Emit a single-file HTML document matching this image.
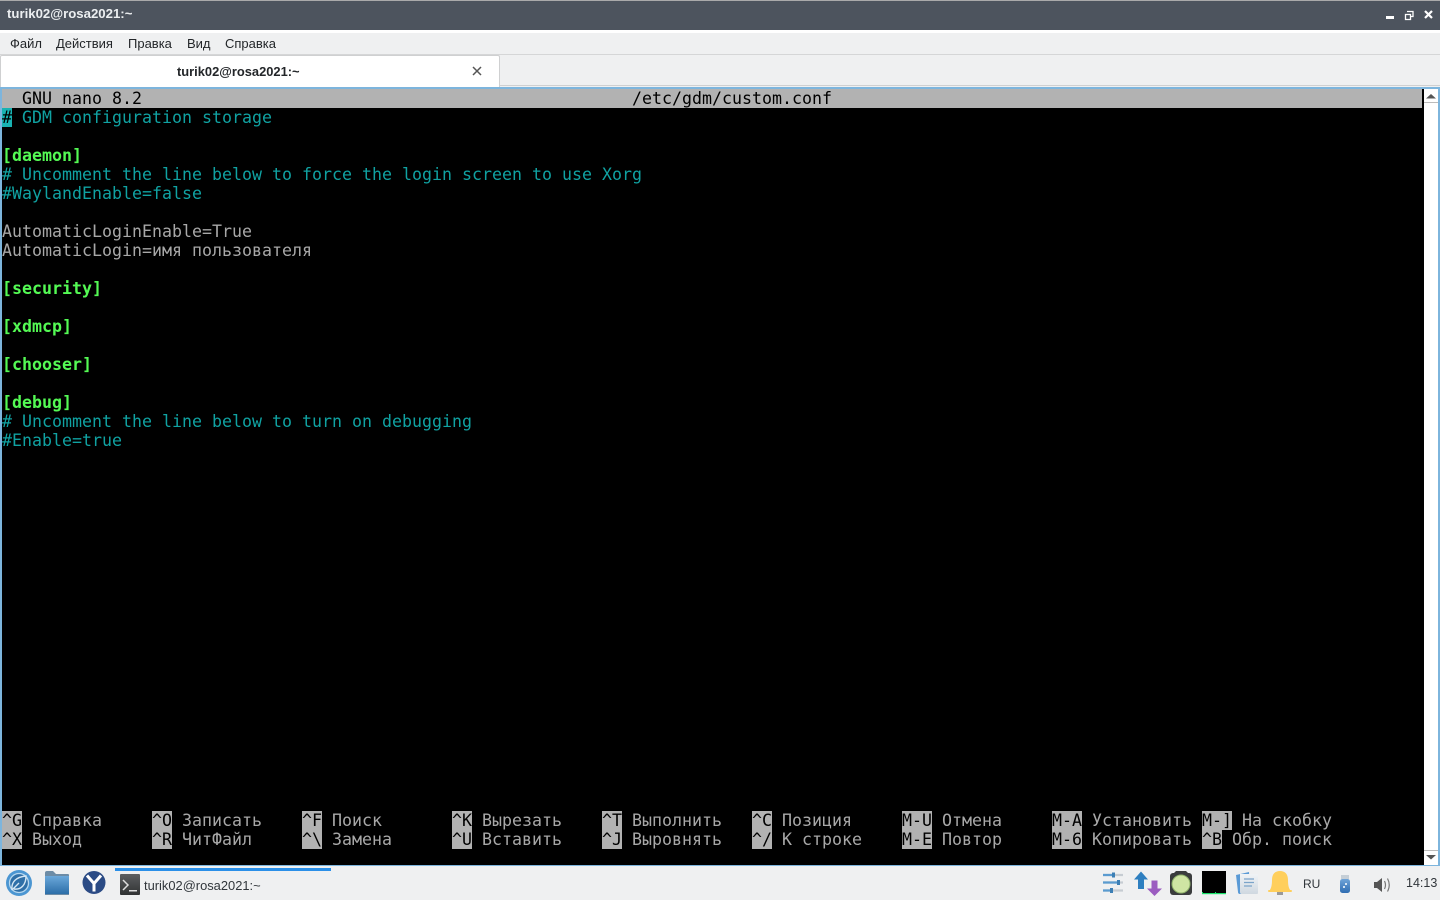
<!DOCTYPE html>
<html><head><meta charset="utf-8"><style>
html,body{margin:0;padding:0;width:1440px;height:900px;overflow:hidden;background:#eff0f1}
*{box-sizing:border-box}
.a{position:absolute;white-space:pre}
.ui{font-family:"Liberation Sans","Noto Sans CJK SC",sans-serif}
.m{top:35px;font-size:13px;line-height:17px;color:#232629}
#term{position:absolute;left:2px;top:89px;width:1422px;height:776px;background:#000;overflow:hidden}
.r{position:absolute;left:0;height:19px;line-height:19px;white-space:pre;font-family:"DejaVu Sans Mono",monospace;font-size:16.61px;color:#a8a8a8}
.c{color:#10a2a2}.g{color:#54fa54;font-weight:bold}.k{background:#b2b2b2;color:#000;display:inline-block;height:19px}
</style></head><body>
<div class="a" style="left:0;top:0;width:1440px;height:1px;background:#aaa"></div>
<div class="a" style="left:0;top:1px;width:1440px;height:29px;background:#4d545e"></div>
<div class="a ui" style="left:7px;top:6px;font-size:13.2px;font-weight:bold;color:#eceff1;line-height:16px">turik02@rosa2021:~</div>
<svg class="a" style="left:1380px;top:6px" width="60" height="20" viewBox="0 0 60 20"><rect x="6" y="10" width="8" height="3" fill="#fff"/><path d="M27 5.500h6v5h-2M25.500 8.500h5v5h-5z" fill="none" stroke="#fff" stroke-width="1.300"/><path d="M45 5l7 7M52 5l-7 7" stroke="#fff" stroke-width="2.200"/></svg>
<div class="a" style="left:0;top:30px;width:1440px;height:3px;background:#fff"></div>
<div class="a" style="left:0;top:33px;width:1440px;height:22px;background:#eff0f1;border-bottom:1px solid #d5d6d7"></div>
<div class="a ui m" style="left:10px">Файл</div>
<div class="a ui m" style="left:56px">Действия</div>
<div class="a ui m" style="left:128px">Правка</div>
<div class="a ui m" style="left:187px">Вид</div>
<div class="a ui m" style="left:225px">Справка</div>
<div class="a" style="left:0;top:55px;width:1440px;height:31px;background:#eff0f1;border-bottom:1px solid #cfd0d1"></div>
<div class="a" style="left:0;top:55px;width:500px;height:32px;background:#fff;border:1px solid #cfd0d1;border-bottom:none;border-radius:2px 2px 0 0"></div>
<div class="a ui" style="left:177px;top:63px;font-size:12.9px;font-weight:bold;line-height:17px;color:#232629">turik02@rosa2021:~</div>
<svg class="a" style="left:472px;top:66px" width="10" height="10" viewBox="0 0 10 10"><path d="M1 1l8 8M9 1l-8 8" stroke="#555" stroke-width="1.500"/></svg>
<div class="a" style="left:0;top:87px;width:1440px;height:779px;background:#fff;border:2px solid #7db5dd"></div>
<div id="term">
<div class="a" style="left:0;top:0;width:1420px;height:19px;background:#b2b2b2"></div>
<div class="r" style="top:0;color:#000">  GNU nano 8.2                                                 /etc/gdm/custom.conf</div>
<div class="r c" style="top:19px"><span style="background:#18b2b2;color:#000">#</span> GDM configuration storage</div>
<div class="r g" style="top:57px">[daemon]</div>
<div class="r c" style="top:76px"># Uncomment the line below to force the login screen to use Xorg</div>
<div class="r c" style="top:95px">#WaylandEnable=false</div>
<div class="r" style="top:133px">AutomaticLoginEnable=True</div>
<div class="r" style="top:152px">AutomaticLogin=имя пользователя</div>
<div class="r g" style="top:190px">[security]</div>
<div class="r g" style="top:228px">[xdmcp]</div>
<div class="r g" style="top:266px">[chooser]</div>
<div class="r g" style="top:304px">[debug]</div>
<div class="r c" style="top:323px"># Uncomment the line below to turn on debugging</div>
<div class="r c" style="top:342px">#Enable=true</div>
<div class="r" style="top:722px"><span class="k">^G</span> Справка</div><div class="r" style="top:741px"><span class="k">^X</span> Выход</div>
<div class="r" style="top:722px;left:150px"><span class="k">^O</span> Записать</div><div class="r" style="top:741px;left:150px"><span class="k">^R</span> ЧитФайл</div>
<div class="r" style="top:722px;left:300px"><span class="k">^F</span> Поиск</div><div class="r" style="top:741px;left:300px"><span class="k">^\</span> Замена</div>
<div class="r" style="top:722px;left:450px"><span class="k">^K</span> Вырезать</div><div class="r" style="top:741px;left:450px"><span class="k">^U</span> Вставить</div>
<div class="r" style="top:722px;left:600px"><span class="k">^T</span> Выполнить</div><div class="r" style="top:741px;left:600px"><span class="k">^J</span> Выровнять</div>
<div class="r" style="top:722px;left:750px"><span class="k">^C</span> Позиция</div><div class="r" style="top:741px;left:750px"><span class="k">^/</span> К строке</div>
<div class="r" style="top:722px;left:900px"><span class="k">M-U</span> Отмена</div><div class="r" style="top:741px;left:900px"><span class="k">M-E</span> Повтор</div>
<div class="r" style="top:722px;left:1050px"><span class="k">M-A</span> Установить</div><div class="r" style="top:741px;left:1050px"><span class="k">M-6</span> Копировать</div>
<div class="r" style="top:722px;left:1200px"><span class="k">M-]</span> На скобку</div><div class="r" style="top:741px;left:1200px"><span class="k">^B</span> Обр. поиск</div>
</div>
<div class="a" style="left:1424px;top:89px;width:14px;height:776px;background:#fff"></div>
<div class="a" style="left:1424px;top:102px;width:14px;height:1px;background:#bbb"></div>
<div class="a" style="left:1424px;top:850px;width:14px;height:1px;background:#bbb"></div>
<svg class="a" style="left:1424px;top:89px" width="14" height="776"><path d="M2 9.500l5-4.500 5 4.500z" fill="#555"/><path d="M2 766l5 4.500 5-4.500z" fill="#555"/></svg>
<div class="a" style="left:0;top:866px;width:1440px;height:34px;background:#eff0f1"></div>
<div class="a" style="left:115px;top:868px;width:216px;height:3px;background:#2a8fe8"></div>
<svg class="a" style="left:0;top:866px" width="140" height="34" viewBox="0 0 140 34">
<defs><linearGradient id="f" x1="0" y1="0" x2="0" y2="1"><stop offset="0" stop-color="#6ba8da"/><stop offset="1" stop-color="#2c6ea8"/></linearGradient>
<linearGradient id="t" x1="0" y1="0" x2="0" y2="1"><stop offset="0" stop-color="#5c5e60"/><stop offset="1" stop-color="#303233"/></linearGradient></defs>
<circle cx="19" cy="17" r="13" fill="#4b96d2"/><circle cx="19" cy="17" r="9.500" fill="#2f70a8" stroke="#b7d8ef" stroke-width="1.300"/><path d="M12 24c-1-8 4-13 14-14 0 9-5 14-12 13M12 24l7-7" fill="none" stroke="#d5e7f4" stroke-width="1.400"/>
<path d="M45 7q0-2 2-2h6l3 3h12q1 0 1 1v20H45z" fill="#6d8ca6"/><rect x="45" y="10" width="24" height="18" fill="url(#f)"/>
<circle cx="94" cy="16.500" r="11.500" fill="#2b4b85"/><path d="M87 9.500l7 8 7-8M94 17.500v8" fill="none" stroke="#fff" stroke-width="3"/>
<rect x="120" y="8" width="20" height="21" rx="1" fill="url(#t)"/><path d="M123 14l5 5-5 5" fill="none" stroke="#ddd" stroke-width="1.500"/><rect x="129" y="24" width="8" height="1.500" fill="#ddd"/>
</svg>
<div class="a ui" style="left:144px;top:877px;font-size:12.9px;line-height:17px;color:#31363b">turik02@rosa2021:~</div>
<svg class="a" style="left:1095px;top:866px" width="300" height="34" viewBox="0 0 300 34">
<defs><linearGradient id="n" x1="0" y1="0" x2="0" y2="1"><stop offset="0" stop-color="#f0f3f6"/><stop offset="1" stop-color="#cfd8e0"/></linearGradient>
<linearGradient id="u" x1="0" y1="0" x2="0" y2="1"><stop offset="0" stop-color="#6fa4d8"/><stop offset="1" stop-color="#2f6db2"/></linearGradient></defs>
<g stroke-width="2.200"><path d="M8 9h20M8 16.500h20M8 24.500h20" stroke="#c6ccd2"/><path d="M8 9h11M8 16.500h15M8 24.500h8" stroke="#5a9bd0"/></g><rect x="17" y="6.500" width="3" height="5" fill="#3c7fb5"/><rect x="22" y="14" width="3" height="5" fill="#3c7fb5"/><rect x="15" y="22" width="3" height="5" fill="#3c7fb5"/>
<path d="M46 5.500l-7 8h4V23h6v-9.500h4z" fill="#2e7fc0"/><path d="M56.500 14.500h6v8h4.500l-7.500 7.500-7.500-7.500h4.500z" fill="#9b5cc0"/>
<rect x="75" y="7" width="22" height="22" rx="3" fill="#3a3c3d"/><path d="M78 8l3-3h10l3 3z" fill="#3a3c3d"/><circle cx="86" cy="18" r="9" fill="#cfe5a3" stroke="#8fb36a" stroke-width="1"/>
<rect x="107" y="5" width="24" height="23" fill="#000"/><rect x="107" y="27" width="24" height="1.200" fill="#19e06a"/><rect x="107" y="26" width="1" height="1" fill="#19e06a"/><rect x="120" y="26" width="1" height="1" fill="#19e06a"/>
<path d="M141 9l13-3 1 20-10 2q-2 0-2-2z" fill="#5a9ad6"/><path d="M145 8h17q1 0 1 1v18q0 1-1 1h-15q-2 0-2-2z" fill="url(#n)"/><path d="M149 13h10M149 16.500h10M149 20h8" stroke="#7ba4c9" stroke-width="1.200"/>
<path d="M185 5c-5 0-8 3-8 9 0 6-1 9-3 11h22c-2-2-3-5-3-11 0-6-3-9-8-9z" fill="#ffcf5c"/><rect x="173" y="24" width="24" height="2" rx="1" fill="#ffcf5c"/><rect x="182" y="26" width="6" height="3" fill="#9a9a9a"/>
<rect x="246" y="9" width="8" height="4" fill="#c5ced6"/><rect x="245" y="13" width="10" height="14" rx="2.500" fill="url(#u)"/><circle cx="251" cy="18" r="1" fill="#fff"/><circle cx="249" cy="21" r="1" fill="#fff"/>
<path d="M279 16h3l5-4v14l-5-4h-3z" fill="#555"/><path d="M289.500 15q2 4 0 8M292.500 12.500q3.500 6.500 0 13" fill="none" stroke="#777" stroke-width="1.200"/>
</svg>
<div class="a ui" style="left:1303px;top:876px;font-size:12px;line-height:16px;color:#31363b">RU</div>
<div class="a ui" style="left:1406px;top:875px;font-size:12.5px;line-height:16px;color:#31363b">14:13</div>
</body></html>
